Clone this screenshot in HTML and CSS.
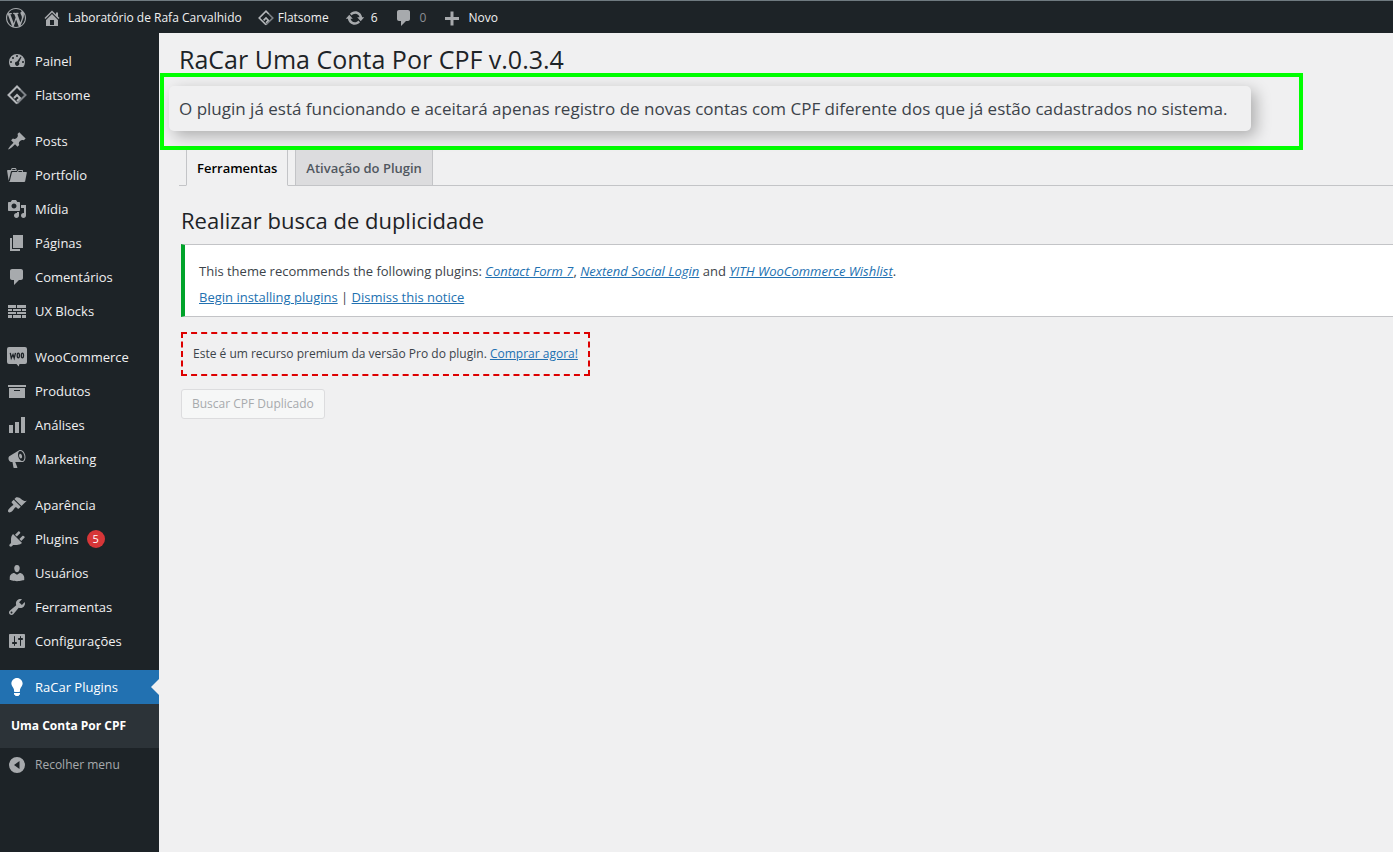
FILE: index.html
```html
<!DOCTYPE html>
<html lang="pt-BR">
<head>
<meta charset="utf-8">
<meta name="viewport" content="width=device-width, initial-scale=1">
<title>RaCar Uma Conta Por CPF</title>
<link rel="stylesheet" href="styles.css">
</head>
<body>
<header class="adminbar">
  <a class="bar-item" href="#" aria-label="WordPress"><svg class="icon" viewBox="0 0 20 20"><path d="M20 10c0-5.51-4.49-10-10-10C4.48 0 0 4.49 0 10c0 5.52 4.48 10 10 10 5.51 0 10-4.48 10-10zM7.78 15.37L4.37 6.22c.55-.02 1.17-.08 1.17-.08.5-.06.44-1.13-.06-1.11 0 0-1.45.11-2.37.11-.18 0-.37 0-.58-.01C4.12 2.69 6.87 1.11 10 1.11c2.33 0 4.45.87 6.05 2.34-.68-.11-1.65.39-1.65 1.58 0 .74.45 1.36.9 2.1.35.61.55 1.36.55 2.46 0 1.49-1.4 5-1.4 5l-3.03-8.37c.54-.02.82-.17.82-.17.5-.05.44-1.25-.06-1.22 0 0-1.44.12-2.38.12-.87 0-2.33-.12-2.33-.12-.5-.03-.56 1.2-.06 1.22l.92.08 1.26 3.41zM17.41 10c.24-.64.74-1.87.43-4.25.7 1.29 1.05 2.71 1.05 4.25 0 3.29-1.73 6.24-4.4 7.78.97-2.59 1.94-5.2 2.92-7.78zM6.1 18.09C3.12 16.65 1.11 13.53 1.11 10c0-1.3.23-2.48.72-3.59C3.25 10.3 4.67 14.2 6.1 18.09zm4.03-6.63l2.58 6.98c-.86.29-1.76.45-2.71.45-.79 0-1.57-.11-2.29-.33.81-2.38 1.62-4.74 2.42-7.1z"/></svg></a>
  <a class="bar-item" href="#"><svg class="icon" viewBox="0 0 20 20"><path d="M16 8.5l1.53 1.53-1.06 1.06L10 4.6l-6.47 6.49-1.06-1.06L10 2.5l4 4v-2h2v4zm-6-2.46l6 5.99V18H4v-5.97zM12 17v-5H8v5h4z"/></svg>Laboratório de Rafa Carvalhido</a>
  <a class="bar-item bar-item-tight" href="#"><svg class="icon icon-small" viewBox="0 0 20 20"><g class="stroke"><path class="dim" d="M13.5 5l5 5-8.500 8.500"/><path d="M10 18.500L1.500 10 10 1.500 13.500 5"/><path d="M7 13l3-3 3 3-3 3"/></g></svg>Flatsome</a>
  <a class="bar-item" href="#"><svg class="icon" viewBox="0 0 20 20"><path d="M10.200 3.280c3.530 0 6.430 2.610 6.920 6h2.080l-3.500 4-3.500-4h2.320c-.45-1.970-2.210-3.450-4.320-3.450-1.450 0-2.730.71-3.540 1.780L4.950 5.660C6.230 4.200 8.110 3.280 10.200 3.280zm-.4 13.440c-3.520 0-6.430-2.610-6.920-6H.8l3.500-4 3.500 4H5.480c.45 1.970 2.210 3.450 4.320 3.450 1.450 0 2.730-.71 3.540-1.780l1.710 1.950c-1.280 1.460-3.150 2.380-5.250 2.380z"/></svg>6</a>
  <a class="bar-item bar-item-muted" href="#"><svg class="icon" viewBox="0 0 20 20"><path d="M5 2h9c1.100 0 2 .9 2 2v7c0 1.100-.9 2-2 2h-2l-5 5v-5H5c-1.100 0-2-.9-2-2V4c0-1.100.9-2 2-2z"/></svg>0</a>
  <a class="bar-item" href="#"><svg class="icon" viewBox="0 0 20 20"><path d="M17 9v3h-5.500v5.500h-3V12H3V9h5.500V3.500h3V9z"/></svg>Novo</a>
</header>
<div class="shell">
  <nav class="sidebar" aria-label="Menu principal">
    <div class="menu-group">
      <a class="menu-item" href="#"><svg class="icon" viewBox="0 0 20 20"><path fill-rule="evenodd" d="M3.760 16h12.480A7.980 7.980 0 0 0 18 11a8 8 0 0 0-16 0c0 1.930.69 3.710 1.760 5zM9 5a1 1 0 1 1 2 0 1 1 0 0 1-2 0zM5 7a1 1 0 1 1 2 0 1 1 0 0 1-2 0zM3 11a1 1 0 1 1 2 0 1 1 0 0 1-2 0zM15 11a1 1 0 1 1 2 0 1 1 0 0 1-2 0zM14.500 6l-2.600 5.600a2.100 2.100 0 1 1-1.800-1L13.700 5.500z"/></svg>Painel</a>
      <a class="menu-item" href="#"><svg class="icon" viewBox="0 0 20 20"><g class="stroke"><path class="dim" d="M13.500 5l5 5-8.500 8.500"/><path d="M10 18.500L1.500 10 10 1.500 13.500 5"/><path d="M7 13l3-3 3 3-3 3"/></g></svg>Flatsome</a>
    </div>
    <div class="menu-group">
      <a class="menu-item" href="#"><svg class="icon" viewBox="0 0 20 20"><path d="M10.440 3.020l1.820-1.820 6.360 6.350-1.830 1.820c-1.050-.68-2.480-.57-3.410.36l-.75.75c-.92.93-1.040 2.350-.35 3.410l-1.830 1.820-2.410-2.410-2.800 2.790c-.42.42-3.380 2.710-3.800 2.290s1.860-3.390 2.280-3.810l2.790-2.790L4.100 9.360l1.830-1.820c1.050.69 2.480.57 3.400-.36l.75-.75c.93-.92 1.050-2.350.36-3.410z"/></svg>Posts</a>
      <a class="menu-item" href="#"><svg class="icon" viewBox="0 0 20 20"><path d="M4 5H.78c-.37 0-.74.32-.69.84l1.560 9.990S3.500 8.470 3.860 6.700c.11-.53.61-.7.98-.7H10s-.7-2.080-.77-2.310C9.110 3.250 8.890 3 8.450 3H5.140c-.36 0-.7.23-.8.64C4.250 4.040 4 5 4 5zm4.880 0h-4s.42-1 .87-1h2.130c.48 0 1 1 1 1zM2.670 16.250c-.31.47-.76.75-1.260.75h15.730c.54 0 .92-.31 1.030-.83.44-2.190 1.680-8.440 1.680-8.440.07-.5-.3-.73-.62-.73H16V5.530c0-.16-.26-.53-.66-.53h-3.760c-.52 0-.87.58-.87.58L10 7H5.590c-.32 0-.63.19-.69.5 0 0-1.590 6.700-1.720 7.330-.07.37-.22.99-.51 1.420zM15.380 7H11s.58-1 1.130-1h2.290c.71 0 .96 1 .96 1z"/></svg>Portfolio</a>
      <a class="menu-item" href="#"><svg class="icon" viewBox="0 0 20 20"><path d="M13 11V4c0-.55-.45-1-1-1h-1.670L9 1H5L3.670 3H2c-.55 0-1 .45-1 1v7c0 .55.45 1 1 1h10c.55 0 1-.45 1-1zM7 4.500c1.380 0 2.500 1.120 2.500 2.500S8.380 9.500 7 9.500 4.500 8.380 4.500 7 5.620 4.500 7 4.500zM14 6h5v10.500c0 1.380-1.120 2.500-2.500 2.500S14 17.880 14 16.500s1.120-2.500 2.500-2.500c.17 0 .34.020.5.050V9h-3V6zm-4 8.050V13h2v3.500c0 1.380-1.120 2.500-2.500 2.500S7 17.880 7 16.500 8.120 14 9.500 14c.17 0 .34.020.5.050z"/></svg>Mídia</a>
      <a class="menu-item" href="#"><svg class="icon" viewBox="0 0 20 20"><path d="M6 15V2h10v13H6zm-1 1h8v2H3V5h2v11z"/></svg>Páginas</a>
      <a class="menu-item" href="#"><svg class="icon" viewBox="0 0 20 20"><path d="M5 2h9c1.100 0 2 .9 2 2v7c0 1.100-.9 2-2 2h-2l-5 5v-5H5c-1.100 0-2-.9-2-2V4c0-1.100.9-2 2-2z"/></svg>Comentários</a>
      <a class="menu-item" href="#"><svg class="icon" viewBox="0 0 20 20"><path d="M1 4h8v3H1zM10 4h9v3h-9zM1 8h4v2H1zM6 8h8v2H6zM15 8h4v2h-4zM1 11h8v2H1zM10 11h9v2h-9zM1 14h4v3H1zM6 14h8v3H6zM15 14h4v3h-4z"/></svg>UX Blocks</a>
    </div>
    <div class="menu-group">
      <a class="menu-item" href="#"><svg class="icon" viewBox="0 0 20 20"><path d="M2 0h16a2 2 0 0 1 2 2v13a2 2 0 0 1-2 2h-5.500l-.8 2.500L9.500 17H2a2 2 0 0 1-2-2V2a2 2 0 0 1 2-2z"/><g class="cut"><path d="M3.300 5.800l1 5.400 1.700-3.700 1.200 3.700 1.300-5.400"/><ellipse cx="11.300" cy="8.500" rx="1.100" ry="2.300"/><ellipse cx="15.400" cy="8.500" rx="1.100" ry="2.300"/></g></svg>WooCommerce</a>
      <a class="menu-item" href="#"><svg class="icon" viewBox="0 0 20 20"><path d="M19 4v2H1V4h18zM2 7h16v10H2V7zm11 3V9H7v1h6z"/></svg>Produtos</a>
      <a class="menu-item" href="#"><svg class="icon" viewBox="0 0 20 20"><path d="M18 18V2h-4v16h4zm-6 0V7H8v11h4zm-6 0v-8H2v8h4z"/></svg>Análises</a>
      <a class="menu-item" href="#"><svg class="icon" viewBox="0 0 20 20"><path d="M18.150 5.940c.46 1.620.38 3.220-.02 4.480-.42 1.280-1.260 2.180-2.300 2.480-.16.06-.26.06-.4.06-.06.02-.12.02-.18.02-.06.02-.14.02-.22.02h-6.800l2.220 5.500c.02.14-.06.26-.14.34-.08.1-.24.16-.34.16H6.950c-.1 0-.26-.06-.34-.16-.08-.08-.16-.2-.14-.34l-1-5.500H4.250l-.02-.02c-.5.06-1.080-.18-1.540-.62s-.88-1.080-1.060-1.880c-.24-.8-.2-1.560-.02-2.200.18-.62.58-1.080 1.060-1.300l.02-.02 9-5.400c.1-.06.18-.1.24-.16.06-.04.14-.08.24-.12.16-.08.28-.12.5-.18 1.040-.3 2.240.1 3.220.98s1.840 2.240 2.260 3.860zm-2.580 5.980h-.02c.4-.1.74-.34 1.040-.7.58-.7.86-1.760.86-3.040 0-.64-.1-1.300-.28-1.980-.34-1.360-1.020-2.500-1.780-3.240s-1.680-1.100-2.460-.88c-.82.22-1.400.96-1.700 2-.32 1.040-.28 2.360.06 3.720.38 1.360 1 2.500 1.800 3.240.78.74 1.620 1.100 2.480.88zm-2.540-7.080c.22-.04.42-.02.62.04.38.16.76.48 1.020 1s.42 1.200.42 1.780c0 .3-.04.56-.12.8-.18.48-.44.84-.86.94-.34.1-.8-.06-1.140-.4s-.64-.86-.78-1.500c-.18-.62-.12-1.240.02-1.720s.48-.84.82-.94z"/></svg>Marketing</a>
    </div>
    <div class="menu-group">
      <a class="menu-item" href="#"><svg class="icon" viewBox="0 0 20 20"><path d="M14.480 11.060L7.410 3.990l1.500-1.500c.5-.56 2.300-.47 3.510.32 1.210.8 1.430 1.280 2.910 2.100 1.180.64 2.450 1.260 4.450.85zm-.71.71L6.700 4.700 4.930 6.470c-.39.39-.39 1.020 0 1.410l1.060 1.060c.39.39.39 1.030 0 1.420-.6.6-1.430 1.110-2.210 1.690-.35.26-.7.53-1.010.84C1.430 14.230.4 16.080 1.400 17.070c.99 1 2.840-.03 4.180-1.360.31-.31.58-.66.85-1.020.57-.78 1.080-1.610 1.690-2.210.39-.39 1.020-.39 1.410 0l1.060 1.060c.39.39 1.020.39 1.410 0z"/></svg>Aparência</a>
      <a class="menu-item" href="#"><svg class="icon" viewBox="0 0 20 20"><path d="M13.110 4.360L9.870 7.600 8 5.730l3.240-3.240c.35-.34 1.050-.2 1.560.32.52.51.66 1.210.31 1.550zm-8 1.770l.91-1.120 9.010 9.010-1.190.84c-.71.71-2.630 1.160-3.820 1.160H6.140L4.900 17.260c-.59.59-1.540.59-2.120 0-.59-.58-.59-1.530 0-2.120l1.240-1.240v-3.880c0-1.130.4-3.190 1.090-3.890zm7.260 3.970l3.240-3.240c.34-.35 1.040-.21 1.550.31.52.51.66 1.210.31 1.550l-3.240 3.250z"/></svg>Plugins <span class="badge">5</span></a>
      <a class="menu-item" href="#"><svg class="icon" viewBox="0 0 20 20"><path d="M10 9.250c-2.270 0-2.730-3.440-2.730-3.440C7 4.020 7.820 2 9.970 2c2.160 0 2.980 2.020 2.710 3.810 0 0-.41 3.440-2.680 3.440zm0 2.570L12.720 10c2.390 0 4.520 2.330 4.520 4.530v2.490s-3.650 1.130-7.240 1.130c-3.650 0-7.240-1.130-7.240-1.130v-2.490c0-2.250 1.940-4.480 4.470-4.480z"/></svg>Usuários</a>
      <a class="menu-item" href="#"><svg class="icon" viewBox="0 0 20 20"><path d="M16.680 9.770c-1.340 1.340-3.300 1.670-4.950.99l-5.410 6.520c-.99.99-2.590.99-3.580 0s-.99-2.590 0-3.570l6.520-5.420c-.68-1.650-.35-3.610.99-4.950 1.280-1.280 3.120-1.620 4.720-1.060l-2.890 2.890 2.820 2.820 2.860-2.870c.53 1.580.18 3.390-1.080 4.650zM3.810 16.210c.4.39 1.040.39 1.430 0 .4-.4.4-1.040 0-1.430-.39-.4-1.030-.4-1.430 0-.39.39-.39 1.030 0 1.430z"/></svg>Ferramentas</a>
      <a class="menu-item" href="#"><svg class="icon" viewBox="0 0 20 20"><path d="M18 16V4c0-.55-.45-1-1-1H3c-.55 0-1 .45-1 1v12c0 .55.45 1 1 1h14c.55 0 1-.45 1-1zM8 11h1c.55 0 1 .45 1 1s-.45 1-1 1H8v1.500c0 .28-.22.5-.5.5s-.5-.22-.5-.5V13H6c-.55 0-1-.45-1-1s.45-1 1-1h1V5.500c0-.28.22-.5.5-.5s.5.22.5.5V11zm5-2h-1c-.55 0-1-.45-1-1s.45-1 1-1h1V5.500c0-.28.22-.5.5-.5s.5.22.5.5V7h1c.55 0 1 .45 1 1s-.45 1-1 1h-1v5.500c0 .28-.22.5-.5.5s-.5-.22-.5-.5V9z"/></svg>Configurações</a>
    </div>
    <div class="menu-group">
      <a class="menu-item menu-item-current" href="#"><svg class="icon" viewBox="0 0 20 20"><path d="M10 1c3.110 0 5.630 2.520 5.630 5.620 0 1.840-2.030 4.580-2.030 4.580-.33.44-.6 1.250-.6 1.800v1c0 .55-.45 1-1 1H8c-.55 0-1-.45-1-1v-1c0-.55-.27-1.360-.6-1.800 0 0-2.020-2.740-2.020-4.580C4.380 3.520 6.890 1 10 1zM7 16.870V16h6v.87c0 .62-.13 1.130-.75 1.130H12c0 .62-.4 1-1.020 1h-2c-.61 0-.98-.38-.98-1h-.25c-.62 0-.75-.51-.75-1.130z"/></svg>RaCar Plugins</a>
      <a class="submenu-item" href="#">Uma Conta Por CPF</a>
      <button class="menu-item menu-collapse" type="button"><svg class="icon" viewBox="0 0 20 20"><path fill-rule="evenodd" d="M10 2a8 8 0 1 1 0 16 8 8 0 0 1 0-16zM12.500 6v8L7 10z"/></svg>Recolher menu</button>
    </div>
  </nav>
  <main class="content">
    <h1 class="page-title">RaCar Uma Conta Por CPF v.0.3.4</h1>
    <div class="highlight">
      <p class="status">O plugin já está funcionando e aceitará apenas registro de novas contas com CPF diferente dos que já estão cadastrados no sistema.</p>
    </div>
    <nav class="tabs" aria-label="Abas">
      <a class="tab tab-active" href="#">Ferramentas</a>
      <a class="tab" href="#">Ativação do Plugin</a>
    </nav>
    <section class="panel">
      <h2 class="panel-title">Realizar busca de duplicidade</h2>
      <div class="notice">
        <p>This theme recommends the following plugins: <em><a href="#">Contact Form 7</a></em>, <em><a href="#">Nextend Social Login</a></em> and <em><a href="#">YITH WooCommerce Wishlist</a></em>.</p>
        <p><a href="#">Begin installing plugins</a> | <a href="#">Dismiss this notice</a></p>
      </div>
      <p class="premium">Este é um recurso premium da versão Pro do plugin. <a href="#">Comprar agora!</a></p>
      <button class="search-button" type="button" disabled>Buscar CPF Duplicado</button>
    </section>
  </main>
</div>
</body>
</html>
```
FILE: styles.css
```css
* { box-sizing: border-box; }
body {
  margin: 0;
  min-height: 100vh;
  display: flex;
  flex-direction: column;
  background: #f0f0f1;
  color: #3c434a;
  font: 12px/20px "Segoe UI", "Open Sans", "Noto Sans", sans-serif;
}
a { color: #2271b1; }
h1, h2, p { margin: 0; }

.icon { width: 20px; height: 20px; flex: none; fill: #a7aaad; }
.icon-small { width: 16px; height: 16px; }
.stroke { fill: none; stroke: #b4b7ba; stroke-width: 2; }
.dim { stroke: #7d8287; }
.cut { fill: none; stroke: #1d2327; stroke-width: 1.3; }

.adminbar {
  display: flex;
  gap: 16px;
  height: 33px;
  padding: 1px 6px 0;
  background: #1d2327;
  border-top: 1px solid #6f7a80;
}
.bar-item {
  display: flex;
  align-items: center;
  gap: 6px;
  color: #f0f0f1;
  text-decoration: none;
  white-space: nowrap;
}
.bar-item-tight { gap: 4px; }
.bar-item-muted { color: #8c8f94; }

.shell { flex: 1; display: flex; }
.sidebar {
  flex: none;
  width: 159px;
  padding-top: 11px;
  background: #1d2327;
}
.menu-group { margin-bottom: 12px; }
.menu-item {
  display: flex;
  align-items: center;
  gap: 8px;
  width: 100%;
  height: 34px;
  padding: 0 0 0 7px;
  border: 0;
  background: none;
  color: #f0f0f1;
  font: inherit;
  font-size: 13px;
  text-decoration: none;
  white-space: nowrap;
}
.menu-item-current {
  position: relative;
  background: #2271b1;
  color: #fff;
}
.menu-item-current .icon { fill: #fff; }
.menu-item-current::after {
  content: "";
  position: absolute;
  right: 0;
  top: 9px;
  border: 8px solid transparent;
  border-right-color: #f0f0f1;
  border-left: 0;
}
.badge {
  min-width: 18px;
  height: 18px;
  border-radius: 9px;
  background: #d63638;
  color: #fff;
  font-size: 11px;
  line-height: 18px;
  text-align: center;
}
.submenu-item {
  display: block;
  padding: 12px 11px;
  background: #2c3338;
  color: #fff;
  font-weight: 700;
  text-decoration: none;
}
.menu-collapse { color: #a7aaad; font-size: 12px; }

.content { flex: 1; min-width: 0; }
.page-title {
  padding: 12px 20px 0;
  color: #1d2327;
  font-size: 25px;
  font-weight: 500;
  line-height: 28px;
}
.highlight {
  display: flex;
  margin: 0 90px 0 1px;
  padding: 9px 5px 15px;
  border: 4px solid #0f0;
}
.status {
  padding: 11px 24px 10px 10px;
  border-radius: 5px;
  background: #f0f0f1;
  box-shadow: 5px 5px 15px rgba(0, 0, 0, .28);
  font-size: 17px;
  line-height: 24px;
}
.tabs {
  display: flex;
  gap: 7px;
  margin-left: 20px;
  padding-left: 7px;
  border-bottom: 1px solid #c3c4c7;
}
.tab {
  margin-bottom: -1px;
  padding: 8px 10px 7px;
  border: 1px solid #c3c4c7;
  border-top: 0;
  background: #dcdcde;
  color: #50575e;
  font-size: 13px;
  font-weight: 600;
  text-decoration: none;
}
.tab-active {
  border-bottom-color: #f0f0f1;
  background: #f0f0f1;
  color: #000;
}
.panel { padding: 19px 0 0 22px; }
.panel-title {
  color: #1d2327;
  font-size: 22px;
  font-weight: 400;
  line-height: 30px;
}
.notice {
  display: grid;
  gap: 6px;
  margin: 9px 0 15px;
  padding: 16px 14px 9px;
  border: 1px solid #c3c4c7;
  border-left: 4px solid #00a32a;
  border-right: 0;
  background: #fff;
  font-size: 13px;
  font-weight: 500;
}
.premium {
  width: fit-content;
  margin-bottom: 13px;
  padding: 10px;
  border: 2px dashed #d00;
}
.search-button {
  padding: 4px 10px;
  border: 1px solid #dcdcde;
  border-radius: 3px;
  background: #f6f7f7;
  color: #a7aaad;
  font: inherit;
}
```
